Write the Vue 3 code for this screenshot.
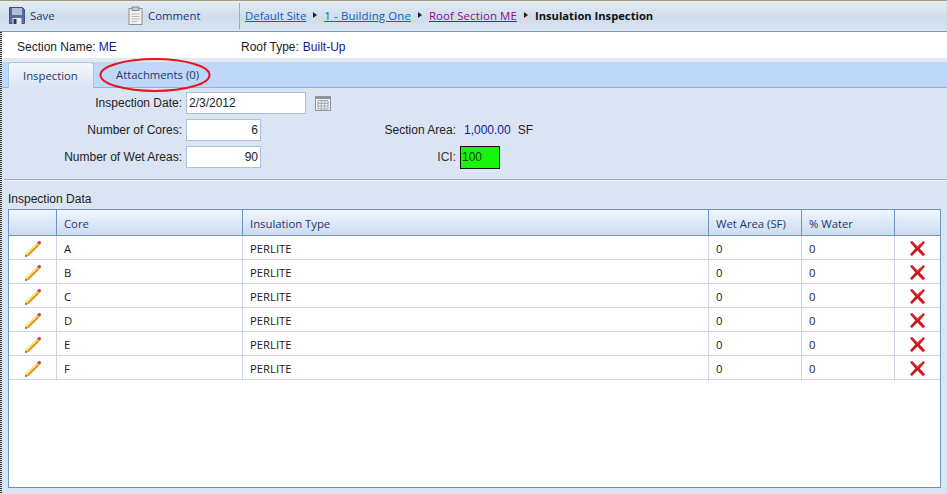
<script setup>
const rows = ['A', 'B', 'C', 'D', 'E', 'F']
</script>

<template>
  <div class="page">
    <header class="toolbar">
      <button class="tool save">
        <svg width="16" height="17" viewBox="0 0 16 17">
          <path d="M.5.5h13l2 2v14H.5z" fill="#566f98" stroke="#3d5580" />
          <rect x="3" y="1" width="10" height="7" fill="#aebfd8" />
          <rect x="3.5" y="11" width="9" height="6" fill="#e4e8ee" />
          <rect x="4.5" y="12" width="3" height="5" fill="#2a3a58" />
        </svg>
        <span>Save</span>
      </button>
      <button class="tool comment">
        <svg width="15" height="19" viewBox="0 0 15 19">
          <rect x="1" y="2.5" width="13" height="16" fill="#f4f1e6" stroke="#8a8f98" />
          <rect x="4" y="1" width="7" height="3.5" fill="#c7ccd4" stroke="#73787f" stroke-width="0.8" />
          <path d="M3.5 8h8M3.5 10.5h8M3.5 13h8M3.5 15.5h6" stroke="#b5bcc8" fill="none" />
        </svg>
        <span>Comment</span>
      </button>
      <nav class="crumbs">
        <a class="link">Default Site</a>
        <i class="arrow"></i>
        <a class="link wide">1 - Building One</a>
        <i class="arrow"></i>
        <a class="link wide visited">Roof Section ME</a>
        <i class="arrow"></i>
        <strong>Insulation Inspection</strong>
      </nav>
    </header>

    <section class="summary">
      <div class="pair first"><span>Section Name:</span><b>ME</b></div>
      <div class="pair"><span>Roof Type:</span><b>Built-Up</b></div>
    </section>

    <div class="tabs">
      <div class="tab active">Inspection</div>
      <div class="tab">Attachments (0)</div>
    </div>

    <section class="form">
      <label>Inspection Date:</label>
      <div class="date-cell">
        <div class="input date">2/3/2012</div>
        <svg class="cal" width="16" height="15" viewBox="0 0 16 15">
          <rect x="0.5" y="0.5" width="15" height="14" fill="#eef1f5" stroke="#8d949c" />
          <rect x="1" y="1" width="14" height="2" fill="#8d949c" />
          <path d="M3 4.5h10v8.5H3zM3 7.3h10M3 10.1h10M6.3 4.5v8.5M9.7 4.5v8.5" fill="none" stroke="#8f99a6" stroke-width="0.8" />
        </svg>
      </div>

      <label>Number of Cores:</label>
      <div class="input num">6</div>
      <label class="area-label">Section Area:</label>
      <div class="area"><b>1,000.00</b><span>SF</span></div>

      <label>Number of Wet Areas:</label>
      <div class="input num">90</div>
      <label class="area-label ici">ICI:</label>
      <div class="ici-box">100</div>
    </section>

    <hr class="rule" />
    <div class="caption">Inspection Data</div>

    <section class="grid">
      <div class="row head">
        <div></div>
        <div>Core</div>
        <div>Insulation Type</div>
        <div>Wet Area (SF)</div>
        <div>% Water</div>
        <div></div>
      </div>
      <div class="row body" v-for="r in rows" :key="r">
        <div class="icon">
          <svg width="18" height="18" viewBox="0 0 18 18">
            <path d="M1.2 16.8l.8-3.2L12.6 3l2.4 2.4L4.4 16z" fill="#f3b52f" />
            <path d="M2 13.6L12.6 3l.9.9L3 14.5z" fill="#fde59a" />
            <path d="M4.4 16L15 5.4l-.7-.7L3.7 15.3z" fill="#d58a14" />
            <path d="M1.2 16.8l.5-2 1.5 1.5z" fill="#222" />
            <path d="M12.6 3l1-1 2.4 2.4-1 1z" fill="#e3e3e6" />
            <circle cx="15.2" cy="2.8" r="1.8" fill="#d43a48" />
          </svg>
        </div>
        <div>{{ r }}</div>
        <div>PERLITE</div>
        <div>0</div>
        <div>0</div>
        <div class="icon">
          <svg width="17" height="17" viewBox="0 0 17 17">
            <path d="M1 2 3.2 1l5.3 5.2L14.2 1 16 2.4 10.7 8.4 16.4 14.6 13.8 16 8.4 10.6 3 16 1 14.4 6.4 8.4z" fill="#d5121b" />
            <path d="M1.2 14.5 6.4 8.4 1 2l1.7 1L8.5 8.2 3 15.8z" fill="#a3272c" opacity=".55" />
            <path d="M3.2 1.6 8.5 6.9 14.2 1.8" fill="none" stroke="#ee8387" stroke-width=".7" />
          </svg>
        </div>
      </div>
    </section>

    <svg class="ring" width="116" height="38" viewBox="0 0 116 38">
      <ellipse cx="57" cy="19" rx="54.5" ry="16" fill="none" stroke="#e8141c" stroke-width="2" />
    </svg>
  </div>
</template>

<style>
html, body { margin: 0; padding: 0; }
</style>

<style scoped>
.page {
  position: relative;
  width: 947px;
  height: 494px;
  overflow: hidden;
  box-sizing: border-box;
  background: #dae4f3;
  border-top: 1px solid #a39a80;
  font-family: "Liberation Sans", Arial, sans-serif;
  font-size: 12px;
  color: #222;
  display: flex;
  flex-direction: column;
}
.page::before {
  content: "";
  position: absolute;
  left: 0; top: 31px; bottom: 0;
  width: 2px;
  background: repeating-linear-gradient(#333 0 1px, #ddd 1px 2px);
}
.toolbar {
  height: 31px;
  flex: none;
  box-sizing: border-box;
  display: flex;
  align-items: center;
  padding: 0 0 1px 9px;
  background: linear-gradient(#e6edf6, #cfdcec 55%, #dbe5f1);
  border-bottom: 1px solid #7d99bd;
  font-family: "Open Sans", sans-serif;
  font-size: 11.4px;
}
.tool {
  all: unset;
  display: flex;
  align-items: center;
  color: #1f3570;
}
.tool span { padding-bottom: 1px; }
.save { width: 119px; gap: 5px; }
.comment { width: 111px; gap: 5px; }
.crumbs {
  height: 26px;
  display: flex;
  align-items: center;
  border-left: 1px solid #8fb0d6;
  padding: 0 0 1px 5px;
  box-sizing: border-box;
}
.link { color: #0a62c8; text-decoration: underline; }
.wide { letter-spacing: 0.14px; }
.visited { color: #8a0f8f; }
.arrow {
  width: 0; height: 0;
  margin: 0 7px 0 7px;
  border-left: 4px solid #222;
  border-top: 3px solid transparent;
  border-bottom: 3px solid transparent;
}
.crumbs strong { color: #111; font-weight: 700; font-size: 11.2px; }

.summary {
  height: 26px;
  flex: none;
  box-sizing: border-box;
  background: #fff;
  display: flex;
  align-items: center;
  padding: 3px 0 0 17px;
}
.pair { display: flex; gap: 4px; }
.pair.first { width: 224px; }
.pair.first { gap: 3px; }
.pair b { font-weight: 400; color: #16169a; }

.tabs {
  height: 30px;
  flex: none;
  box-sizing: border-box;
  display: flex;
  align-items: flex-end;
  padding: 4px 0 0 8px;
  background: linear-gradient(#e3e9f3 4px, #bfd8fa 4px);
  border-bottom: 1px solid #8fb3e0;
  font-family: "Open Sans", sans-serif;
  font-size: 11.3px;
  color: #1f3570;
}
.tab {
  height: 25px;
  box-sizing: border-box;
  padding: 5px 0 0 22px;
}
.tab.active {
  width: 86px;
  height: 26px;
  margin-bottom: -1px;
  padding-left: 14px;
  border: 1px solid #a5c4ec;
  border-bottom: 0;
  border-radius: 3px 3px 0 0;
  background: linear-gradient(#f4f8fd, #dae4f3);
}

.form {
  display: grid;
  grid-template-columns: 182px 75px 191px 1fr;
  column-gap: 4px;
  row-gap: 5px;
  grid-auto-rows: 22px;
  align-items: center;
  padding-top: 4px;
  height: 91px;
  box-sizing: border-box;
  flex: none;
}
.form label { text-align: right; }
.date-cell {
  grid-column: 2 / 5;
  display: flex;
  align-items: center;
  gap: 9px;
}
.input {
  height: 22px;
  box-sizing: border-box;
  background: #fff;
  border: 1px solid #a9c0dc;
  line-height: 20px;
  padding: 0 2px;
}
.date { width: 120px; font-size: 12px; }
.num { text-align: right; }
.area { display: flex; gap: 7px; padding-left: 4px; }
.area b { font-weight: 400; color: #16169a; }
.area-label.ici { color: #333; }
.ici-box {
  width: 40px;
  height: 23px;
  box-sizing: border-box;
  border: 1px solid #111;
  background: #19f50a;
  line-height: 21px;
  padding-left: 1px;
  color: #0f3f0f;
}
.rule {
  margin: 0 0 0 4px;
  height: 2px;
  border: 0;
  background: linear-gradient(#a4aab2 50%, #eef2f8 50%);
  flex: none;
}
.caption {
  padding: 11px 0 0 8px;
  height: 16px;
  line-height: 14px;
  flex: none;
  color: #222;
}
.grid {
  margin: 1px 6px 0 8px;
  height: 279px;
  flex: none;
  box-sizing: border-box;
  background: #fff;
  border: 1px solid #6f94c6;
  border-bottom-color: #6c8cad;
  font-family: "Open Sans", sans-serif;
  font-size: 11.3px;
}
.row {
  display: grid;
  grid-template-columns: 48px 186px 466px 93px 93px 1fr;
  height: 24px;
  box-sizing: border-box;
  border-bottom: 1px solid #ccd6e6;
  align-items: stretch;
}
.row > div {
  padding-left: 7px;
  line-height: 25px;
  border-right: 1px solid #ccd6e6;
  color: #222;
}
.row > div:last-child { border-right: 0; }
.row > .icon {
  padding: 0;
  display: flex;
  align-items: center;
  justify-content: center;
}
.head {
  height: 26px;
  background: linear-gradient(#f0f5fb, #cbdcf2);
  border-bottom: 1px solid #6f94c6;
}
.head > div {
  color: #1f3570;
  line-height: 27px;
  border-right: 1px solid #6f94c6;
}
.ring {
  position: absolute;
  left: 98px;
  top: 55px;
}
</style>
